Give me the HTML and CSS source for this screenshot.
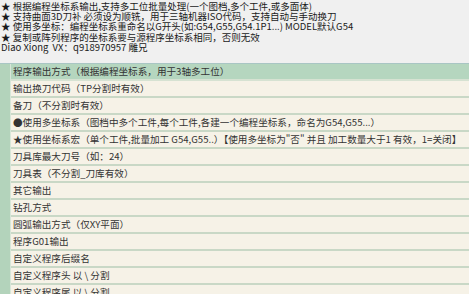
FILE: index.html
```html
<!DOCTYPE html>
<html lang="zh">
<head>
  <meta charset="UTF-8">
  <title>后处理设置</title>
  <link rel="stylesheet" href="styles.css">
</head>
<body>

  <div class="notes">
    <div>★ 根据编程坐标系输出,支持多工位批量处理(一个图档,多个工件,或多面体)</div>
    <div>★ 支持曲面3D刀补 必须设为顺铣，用于三轴机器ISO代码，支持自动与手动换刀</div>
    <div>★ 使用多坐标：编程坐标系重命名以G开头(如:G54,G55,G54.1P1...) MODEL默认G54</div>
    <div>★ 复制或阵列程序的坐标系要与源程序坐标系相同，否则无效</div>
    <div>Diao Xiong&nbsp; VX：q918970957 雕兄</div>
  </div>

  <div class="table">
    <div class="strip"></div>
    <div class="rows">
      <div class="row selected">程序输出方式（根据编程坐标系，用于3轴多工位）</div>
      <div class="row">输出换刀代码（TP分割时有效）</div>
      <div class="row">备刀（不分割时有效）</div>
      <div class="row">●使用多坐标系（图档中多个工件,每个工件,各建一个编程坐标系，命名为G54,G55...）</div>
      <div class="row">★使用坐标系宏（单个工件,批量加工 G54,G55..）【使用多坐标为"否" 并且 加工数量大于1 有效，1=关闭】</div>
      <div class="row">刀具库最大刀号（如：24）</div>
      <div class="row">刀具表（不分割_刀库有效）</div>
      <div class="row">其它输出</div>
      <div class="row">钻孔方式</div>
      <div class="row">圆弧输出方式（仅XY平面）</div>
      <div class="row">程序G01输出</div>
      <div class="row">自定义程序后缀名</div>
      <div class="row">自定义程序头 以 \ 分割</div>
      <div class="row">自定义程序尾 以 \ 分割</div>
    </div>
  </div>

</body>
</html>
```

FILE: styles.css
```css
body {
  margin: 0;
  background-color: #f0f0f0;
  font-family: "Noto Sans CJK SC", "Liberation Sans", sans-serif;
  color: #1a1a1a;
  overflow: hidden;
}

/* 顶部说明文字 */
.notes {
  font-size: 9.5px;
  line-height: 10.2px;
  padding: 1px 0 0 1px;
  height: 63px;
  box-sizing: border-box;
  white-space: nowrap;
}

.table {
  display: flex;
  border-top: 1px solid #a9c6c4;
}

.strip {
  width: 10px;
  flex-shrink: 0;
  background-color: #b3d3bb;
  border-right: 1px solid #d7e6d8;
}

.rows {
  flex: 1;
}

.row {
  height: 15px;
  line-height: 15px;
  padding-left: 2px;
  font-size: 9.6px;
  color: #333;
  background-color: #f6f2e7;
  border-bottom: 2px solid #c9d8c6;
  white-space: nowrap;
}

.row.selected {
  background-color: #b5d6bf;
  border-bottom-color: #d6e2d2;
}
```
